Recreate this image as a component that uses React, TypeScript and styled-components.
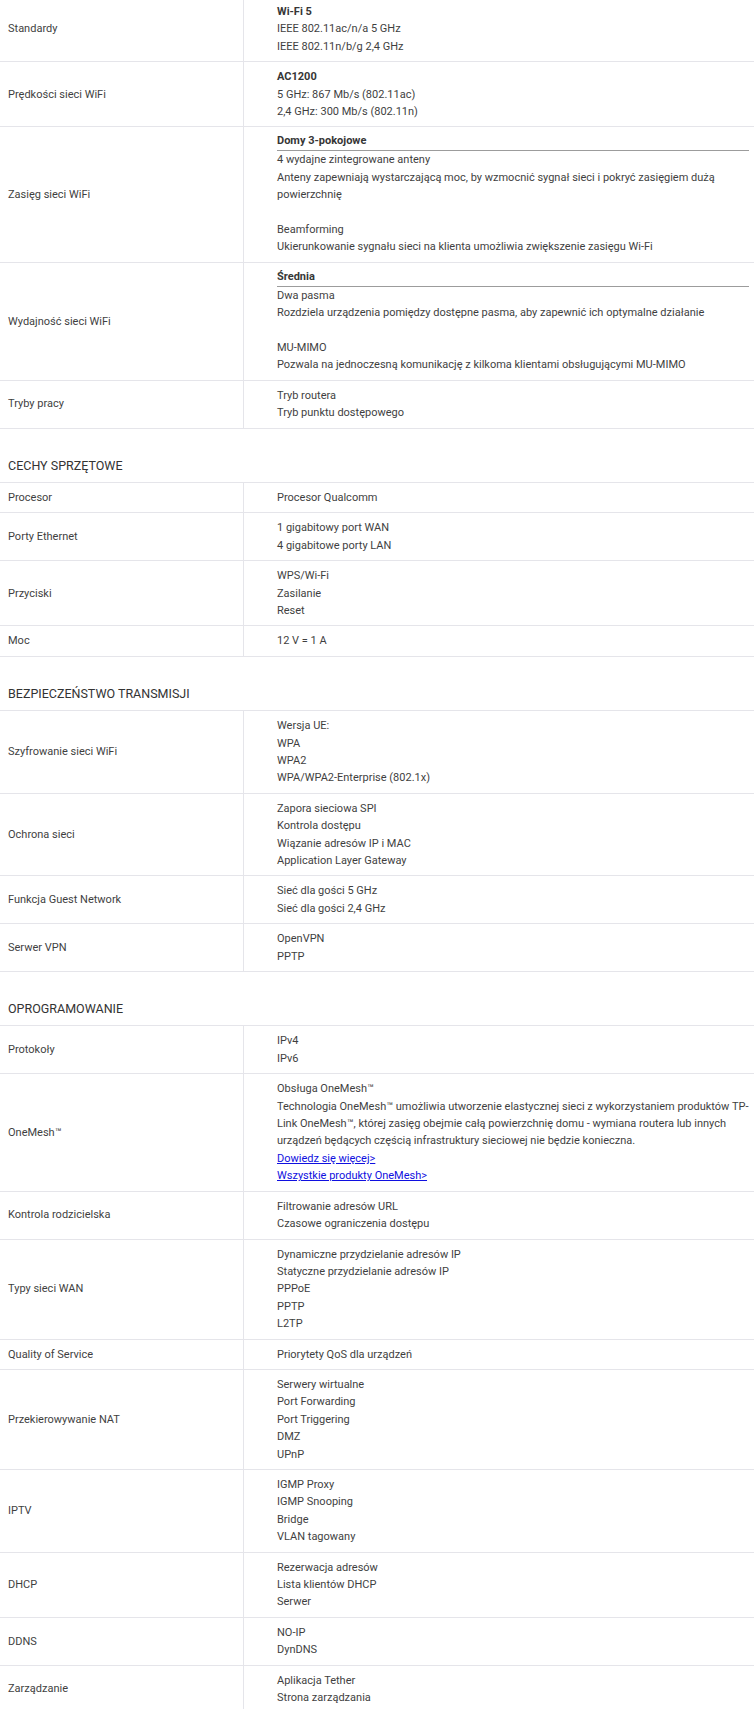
import styled, { createGlobalStyle } from "styled-components";

const GlobalStyle = createGlobalStyle`
  body {
    margin: 0;
    background: #ffffff;
    font-family: Roboto, "Liberation Sans", Arial, sans-serif;
    color: #3f3f3f;
  }
`;

type Line = string | null | { text: string; href: string };

interface SpecRow {
  label: string;
  heading?: string;
  ruled?: boolean;
  lines: Line[];
}

interface SpecSection {
  title?: string;
  rows: SpecRow[];
}

const specs: SpecSection[] = [
  {
    rows: [
      {
        label: "Standardy",
        heading: "Wi-Fi 5",
        lines: ["IEEE 802.11ac/n/a 5 GHz", "IEEE 802.11n/b/g 2,4 GHz"],
      },
      {
        label: "Prędkości sieci WiFi",
        heading: "AC1200",
        lines: ["5 GHz: 867 Mb/s (802.11ac)", "2,4 GHz: 300 Mb/s (802.11n)"],
      },
      {
        label: "Zasięg sieci WiFi",
        heading: "Domy 3-pokojowe",
        ruled: true,
        lines: [
          "4 wydajne zintegrowane anteny",
          "Anteny zapewniają wystarczającą moc, by wzmocnić sygnał sieci i pokryć zasięgiem dużą",
          "powierzchnię",
          null,
          "Beamforming",
          "Ukierunkowanie sygnału sieci na klienta umożliwia zwiększenie zasięgu Wi-Fi",
        ],
      },
      {
        label: "Wydajność sieci WiFi",
        heading: "Średnia",
        ruled: true,
        lines: [
          "Dwa pasma",
          "Rozdziela urządzenia pomiędzy dostępne pasma, aby zapewnić ich optymalne działanie",
          null,
          "MU-MIMO",
          "Pozwala na jednoczesną komunikację z kilkoma klientami obsługującymi MU-MIMO",
        ],
      },
      {
        label: "Tryby pracy",
        lines: ["Tryb routera", "Tryb punktu dostępowego"],
      },
    ],
  },
  {
    title: "CECHY SPRZĘTOWE",
    rows: [
      { label: "Procesor", lines: ["Procesor Qualcomm"] },
      {
        label: "Porty Ethernet",
        lines: ["1 gigabitowy port WAN", "4 gigabitowe porty LAN"],
      },
      { label: "Przyciski", lines: ["WPS/Wi-Fi", "Zasilanie", "Reset"] },
      { label: "Moc", lines: ["12 V = 1 A"] },
    ],
  },
  {
    title: "BEZPIECZEŃSTWO TRANSMISJI",
    rows: [
      {
        label: "Szyfrowanie sieci WiFi",
        lines: ["Wersja UE:", "WPA", "WPA2", "WPA/WPA2-Enterprise (802.1x)"],
      },
      {
        label: "Ochrona sieci",
        lines: [
          "Zapora sieciowa SPI",
          "Kontrola dostępu",
          "Wiązanie adresów IP i MAC",
          "Application Layer Gateway",
        ],
      },
      {
        label: "Funkcja Guest Network",
        lines: ["Sieć dla gości 5 GHz", "Sieć dla gości 2,4 GHz"],
      },
      { label: "Serwer VPN", lines: ["OpenVPN", "PPTP"] },
    ],
  },
  {
    title: "OPROGRAMOWANIE",
    rows: [
      { label: "Protokoły", lines: ["IPv4", "IPv6"] },
      {
        label: "OneMesh™",
        lines: [
          "Obsługa OneMesh™",
          "Technologia OneMesh™ umożliwia utworzenie elastycznej sieci z wykorzystaniem produktów TP-",
          "Link OneMesh™, której zasięg obejmie całą powierzchnię domu - wymiana routera lub innych",
          "urządzeń będących częścią infrastruktury sieciowej nie będzie konieczna.",
          { text: "Dowiedz się więcej>", href: "#onemesh" },
          { text: "Wszystkie produkty OneMesh>", href: "#onemesh-products" },
        ],
      },
      {
        label: "Kontrola rodzicielska",
        lines: ["Filtrowanie adresów URL", "Czasowe ograniczenia dostępu"],
      },
      {
        label: "Typy sieci WAN",
        lines: [
          "Dynamiczne przydzielanie adresów IP",
          "Statyczne przydzielanie adresów IP",
          "PPPoE",
          "PPTP",
          "L2TP",
        ],
      },
      { label: "Quality of Service", lines: ["Priorytety QoS dla urządzeń"] },
      {
        label: "Przekierowywanie NAT",
        lines: [
          "Serwery wirtualne",
          "Port Forwarding",
          "Port Triggering",
          "DMZ",
          "UPnP",
        ],
      },
      {
        label: "IPTV",
        lines: ["IGMP Proxy", "IGMP Snooping", "Bridge", "VLAN tagowany"],
      },
      {
        label: "DHCP",
        lines: ["Rezerwacja adresów", "Lista klientów DHCP", "Serwer"],
      },
      { label: "DDNS", lines: ["NO-IP", "DynDNS"] },
      {
        label: "Zarządzanie",
        lines: ["Aplikacja Tether", "Strona zarządzania"],
      },
    ],
  },
];

const SpecPage = styled.div`
  margin-top: -3px;
  font-size: 11px;
  line-height: 17.4px;
`;
const SectionTitle = styled.div`
  padding: 28px 8px 8px;
  font-size: 12.5px;
  color: #333;
  border-bottom: 1px solid #e5e5ea;
`;
const Row = styled.div`
  display: grid;
  grid-template-columns: 244px 1fr;
  border-bottom: 1px solid #e5e5ea;
`;
const Label = styled.div`
  display: flex;
  align-items: center;
  padding: 6px 8px;
  border-right: 1px solid #e5e5ea;
`;
const Value = styled.div`
  display: flex;
  flex-direction: column;
  padding: 6px 5px 6px 33px;
  white-space: nowrap;
`;
const Heading = styled.div<{ $ruled?: boolean }>`
  font-weight: 700;
  color: #363636;
  line-height: ${(p) => (p.$ruled ? "16.9px" : "17.4px")};
  border-bottom: ${(p) => (p.$ruled ? "1px solid #9c9c9c" : "none")};
`;
const ValueLine = styled.div`
  min-height: 17.4px;
`;
const LineLink = styled.a`
  color: #1010e0;
  text-decoration: underline;
`;

function App() {
  return (
    <>
      <GlobalStyle />
      <SpecPage>
        {specs.map((section, si) => (
          <div key={si}>
            {section.title && <SectionTitle>{section.title}</SectionTitle>}
            {section.rows.map((row) => (
              <Row key={row.label}>
                <Label>{row.label}</Label>
                <Value>
                  {row.heading && (
                    <Heading $ruled={row.ruled}>{row.heading}</Heading>
                  )}
                  {row.lines.map((line, i) => (
                    <ValueLine key={i}>
                      {line === null ? null : typeof line === "string" ? (
                        line
                      ) : (
                        <LineLink href={line.href}>{line.text}</LineLink>
                      )}
                    </ValueLine>
                  ))}
                </Value>
              </Row>
            ))}
          </div>
        ))}
      </SpecPage>
    </>
  );
}

export default App;
